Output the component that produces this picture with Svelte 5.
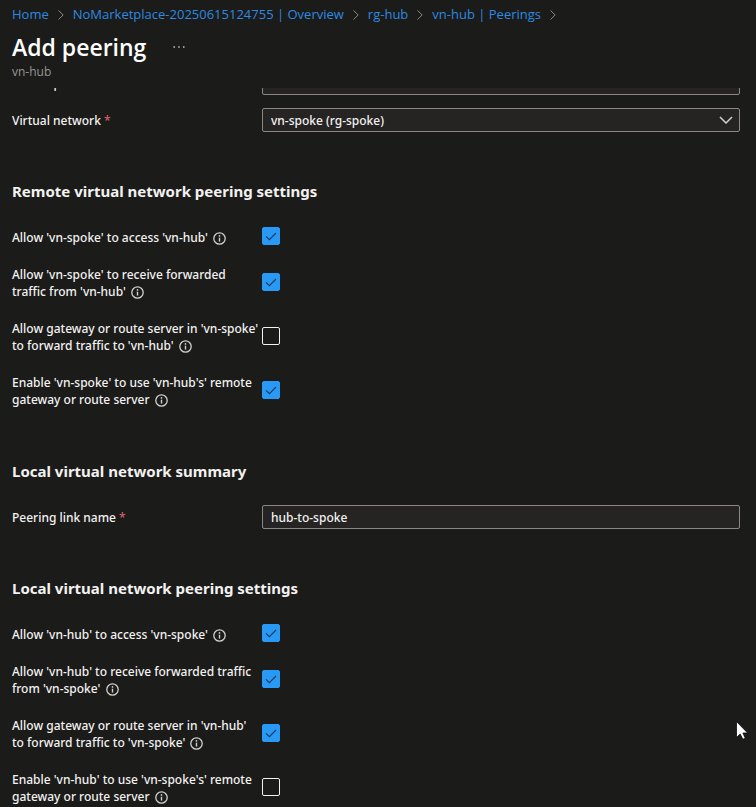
<script>
  const crumbs = ['Home', 'NoMarketplace-20250615124755 | Overview', 'rg-hub', 'vn-hub | Peerings'];

  let remote = $state([
    { id: 'remote-access', lines: ["Allow 'vn-spoke' to access 'vn-hub'"], checked: true },
    { id: 'remote-forwarded', lines: ["Allow 'vn-spoke' to receive forwarded", "traffic from 'vn-hub'"], checked: true },
    { id: 'remote-gateway', lines: ["Allow gateway or route server in 'vn-spoke'", "to forward traffic to 'vn-hub'"], checked: false },
    { id: 'remote-use-gateway', lines: ["Enable 'vn-spoke' to use 'vn-hub's' remote", 'gateway or route server'], checked: true }
  ]);

  let local = $state([
    { id: 'local-access', lines: ["Allow 'vn-hub' to access 'vn-spoke'"], checked: true },
    { id: 'local-forwarded', lines: ["Allow 'vn-hub' to receive forwarded traffic", "from 'vn-spoke'"], checked: true },
    { id: 'local-gateway', lines: ["Allow gateway or route server in 'vn-hub'", "to forward traffic to 'vn-spoke'"], checked: true },
    { id: 'local-use-gateway', lines: ["Enable 'vn-hub' to use 'vn-spoke's' remote", 'gateway or route server'], checked: false }
  ]);

  let linkName = $state('hub-to-spoke');
</script>

{#snippet options(items)}
  <div class="options">
    {#each items as item (item.id)}
      <div class="option">
        <label for={item.id}>
          {#each item.lines as line, i}
            {#if i > 0}<br />{/if}{line}
          {/each}
          <svg class="info" viewBox="0 0 13 13" aria-hidden="true">
            <circle cx="6.5" cy="6.5" r="5.7" fill="none" stroke="currentColor" stroke-width="1.3" />
            <path d="M6.5 5.7V9.6" stroke="currentColor" stroke-width="1.4" />
            <circle cx="6.5" cy="3.9" r="0.85" fill="currentColor" />
          </svg>
        </label>
        <span class="box">
          <input type="checkbox" id={item.id} bind:checked={item.checked} />
          {#if item.checked}
            <svg viewBox="0 0 18 18" aria-hidden="true">
              <path d="M4 9.3L7.4 12.7L14 6" fill="none" stroke="#173a5c" stroke-width="1.1" />
            </svg>
          {/if}
        </span>
      </div>
    {/each}
  </div>
{/snippet}

{#snippet chevron()}
  <svg class="chevron" viewBox="0 0 14 8" aria-hidden="true">
    <path d="M1 1L7 7L13 1" fill="none" stroke="currentColor" stroke-width="1.5" />
  </svg>
{/snippet}

<div class="page">
  <header>
    <nav aria-label="Breadcrumb">
      {#each crumbs as crumb}
        <a href="#top">{crumb}</a>
        <svg viewBox="0 0 6 10" aria-hidden="true">
          <path d="M0.5 0.5L5.2 5L0.5 9.5" fill="none" stroke="currentColor" stroke-width="1" />
        </svg>
      {/each}
    </nav>
    <div class="title">
      <h1>Add peering</h1>
      <button aria-label="More actions">
        <svg viewBox="0 0 12 2" aria-hidden="true">
          <path d="M0.5 0.3H2V1.7H0.5ZM5.2 0.3H6.7V1.7H5.2ZM10 0.3H11.5V1.7H10Z" fill="currentColor" />
        </svg>
      </button>
    </div>
    <p>vn-hub</p>
  </header>

  <main>
    <div class="field scrolled">
      <label for="subscription">Subscription <span>*</span></label>
      <div class="select">
        <select id="subscription"><option></option></select>
        {@render chevron()}
      </div>
    </div>
    <div class="field">
      <label for="vnet">Virtual network <span>*</span></label>
      <div class="select">
        <select id="vnet"><option>vn-spoke (rg-spoke)</option></select>
        {@render chevron()}
      </div>
    </div>

    <h2>Remote virtual network peering settings</h2>
    {@render options(remote)}

    <h2>Local virtual network summary</h2>
    <div class="field">
      <label for="link">Peering link name <span>*</span></label>
      <input id="link" type="text" bind:value={linkName} />
    </div>

    <h2>Local virtual network peering settings</h2>
    {@render options(local)}
  </main>

  <svg class="pointer" viewBox="0 0 12 19" aria-hidden="true">
    <path d="M0.5 0.5V16.5L4.2 13L6.8 18.3L9.3 17.2L6.9 12H11.6Z" fill="#fff" stroke="#0a0a14" stroke-width="0.8" />
  </svg>
</div>

<style>
  :global(body) {
    margin: 0;
    background: #1b1b1a;
  }

  .page {
    position: relative;
    display: flex;
    flex-direction: column;
    height: 100vh;
    overflow: hidden;
    background: #1b1b1a;
    color: #f3f2f1;
    font-family: 'Open Sans', 'Noto Sans', sans-serif;
    font-size: 12px;
    line-height: 17px;
  }

  header {
    flex: none;
    height: 88px;
    padding: 0 12px;
    box-sizing: border-box;
  }

  nav {
    display: flex;
    align-items: center;
    gap: 9px;
    height: 28px;
    color: #8a8886;
    font-size: 13px;
    white-space: nowrap;
  }

  nav a {
    color: #2d8ae0;
    text-decoration: none;
  }

  nav svg {
    width: 6px;
    height: 10px;
    margin-top: 2px;
  }

  .title {
    display: flex;
    align-items: center;
    gap: 27px;
    height: 36px;
    padding-top: 1px;
  }

  h1 {
    margin: 0;
    color: #fff;
    font-size: 23px;
    font-weight: 600;
    line-height: 36px;
  }

  .title button {
    display: flex;
    padding: 0;
    border: 0;
    background: none;
    color: #c8c6c4;
  }

  .title button svg {
    width: 12px;
    height: 2px;
  }

  header p {
    margin: 0;
    color: #979593;
    font-size: 12px;
    line-height: 14px;
  }

  main {
    flex: 1;
    min-height: 0;
    padding: 0 16px 0 12px;
    overflow: hidden;
    font-family: 'Noto Sans', 'Open Sans', sans-serif;
    font-weight: 500;
  }

  .field {
    display: grid;
    grid-template-columns: 250px 1fr;
    align-items: center;
    height: 24px;
    margin-bottom: 13px;
  }

  .scrolled {
    margin-top: -17px;
  }

  .field label span {
    color: #d1606a;
  }

  .select {
    display: grid;
    align-items: center;
  }

  .select > :global(*) {
    grid-area: 1 / 1;
  }

  select,
  input[type='text'] {
    appearance: none;
    width: 100%;
    height: 24px;
    box-sizing: border-box;
    margin: 0;
    padding: 0 8px;
    border: 1px solid #8a8886;
    border-radius: 2px;
    background: #252423;
    color: #f3f2f1;
    font: inherit;
  }

  .chevron {
    justify-self: end;
    width: 14px;
    height: 8px;
    margin-right: 7px;
    color: #d2d0ce;
    pointer-events: none;
  }

  h2 {
    margin: 48px 0 23px;
    font-size: 15px;
    font-weight: 700;
    line-height: 22px;
  }

  .options {
    display: flex;
    flex-direction: column;
    gap: 18px;
    padding: 1px 0 4px;
  }

  .option {
    display: grid;
    grid-template-columns: 250px 18px;
    align-items: center;
    min-height: 20px;
  }

  .option label {
    padding-top: 2px;
    white-space: nowrap;
  }

  .info {
    width: 13px;
    height: 13px;
    margin-left: 2px;
    vertical-align: -3px;
    color: #d2d0ce;
  }

  .box {
    display: grid;
    width: 18px;
    height: 18px;
  }

  .box > * {
    grid-area: 1 / 1;
  }

  .box svg {
    pointer-events: none;
  }

  input[type='checkbox'] {
    appearance: none;
    width: 18px;
    height: 18px;
    box-sizing: border-box;
    margin: 0;
    border: 1px solid #f3f2f1;
    border-radius: 2px;
  }

  input[type='checkbox']:checked {
    border-color: #2899f5;
    background: #2899f5;
  }

  .pointer {
    position: absolute;
    right: 8px;
    top: 721px;
    width: 12px;
    height: 19px;
  }
</style>
